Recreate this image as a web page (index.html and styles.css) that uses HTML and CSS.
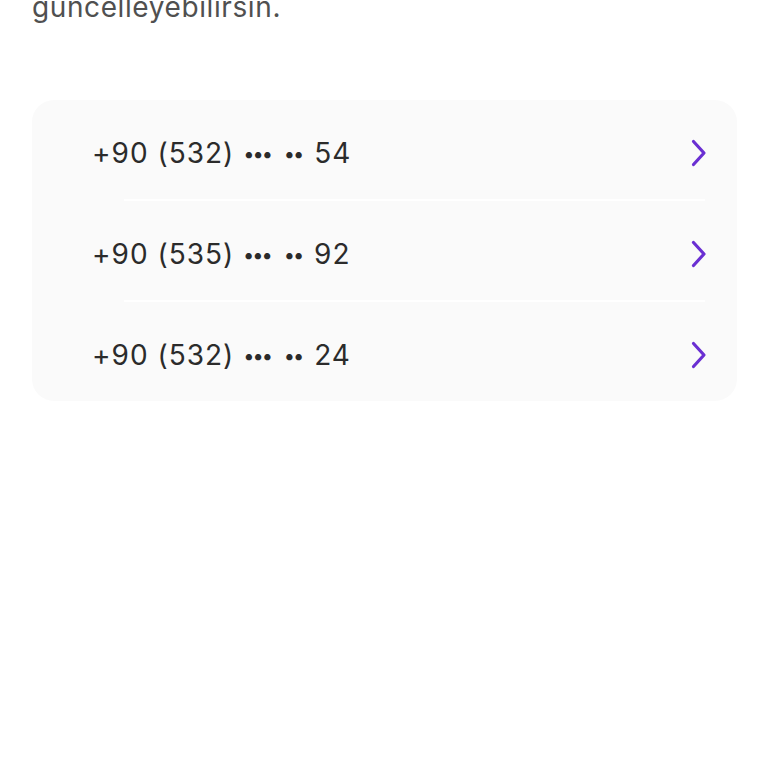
FILE: index.html
```html
<!DOCTYPE html>
<html lang="tr">
<head>
  <meta charset="UTF-8" />
  <meta name="viewport" content="width=device-width, initial-scale=1.0"/>
  <title>Telefon numaraları</title>
  <link rel="stylesheet" href="styles.css">
</head>
<body>

  <p class="intro">güncelleyebilirsin.</p>

  <div class="phone-list">
    <a class="phone-row" href="#">
      <span class="phone-number">+90 (532) <span class="mask">•••</span> <span class="mask second">••</span> 54</span>
      <svg class="chevron" viewBox="0 0 16 28" width="16" height="28">
        <path d="M2.5 2.5 L13 14 L2.5 25.5" />
      </svg>
    </a>
    <div class="divider"></div>
    <a class="phone-row" href="#">
      <span class="phone-number">+90 (535) <span class="mask">•••</span> <span class="mask second">••</span> 92</span>
      <svg class="chevron" viewBox="0 0 16 28" width="16" height="28">
        <path d="M2.5 2.5 L13 14 L2.5 25.5" />
      </svg>
    </a>
    <div class="divider"></div>
    <a class="phone-row" href="#">
      <span class="phone-number">+90 (532) <span class="mask">•••</span> <span class="mask second">••</span> 24</span>
      <svg class="chevron" viewBox="0 0 16 28" width="16" height="28">
        <path d="M2.5 2.5 L13 14 L2.5 25.5" />
      </svg>
    </a>
  </div>

</body>
</html>
```
FILE: styles.css
```css
body {
  font-family: Inter, "Noto Sans", sans-serif;
  margin: 0;
  background-color: #fff;
  color: #2b2b2b;
}
.intro {
  margin: -10px 0 0 32px;
  font-size: 28px;
  line-height: 34px;
  letter-spacing: 0.6px;
  color: #505050;
}
.phone-list {
  margin: 76px 31px 0 32px;
  background-color: #fafafa;
  border-radius: 22px;
  overflow: hidden;
}
.phone-row {
  display: flex;
  align-items: center;
  justify-content: space-between;
  height: 99px;
  padding: 6px 30px 0 60px;
  box-sizing: border-box;
  text-decoration: none;
  color: #2b2b2b;
}
.phone-number {
  font-size: 28px;
  letter-spacing: 1px;
}
.mask {
  font-size: 20px;
  letter-spacing: -2px;
  vertical-align: 2px;
}
.mask.second {
  margin-left: 4px;
  margin-right: 3px;
}
.chevron {
  fill: none;
  stroke: #6a2fd2;
  stroke-width: 3.2;
  stroke-linecap: round;
  stroke-linejoin: round;
}
.divider {
  height: 2px;
  margin: 0 32px 0 92px;
  background-color: #fff;
}
```
